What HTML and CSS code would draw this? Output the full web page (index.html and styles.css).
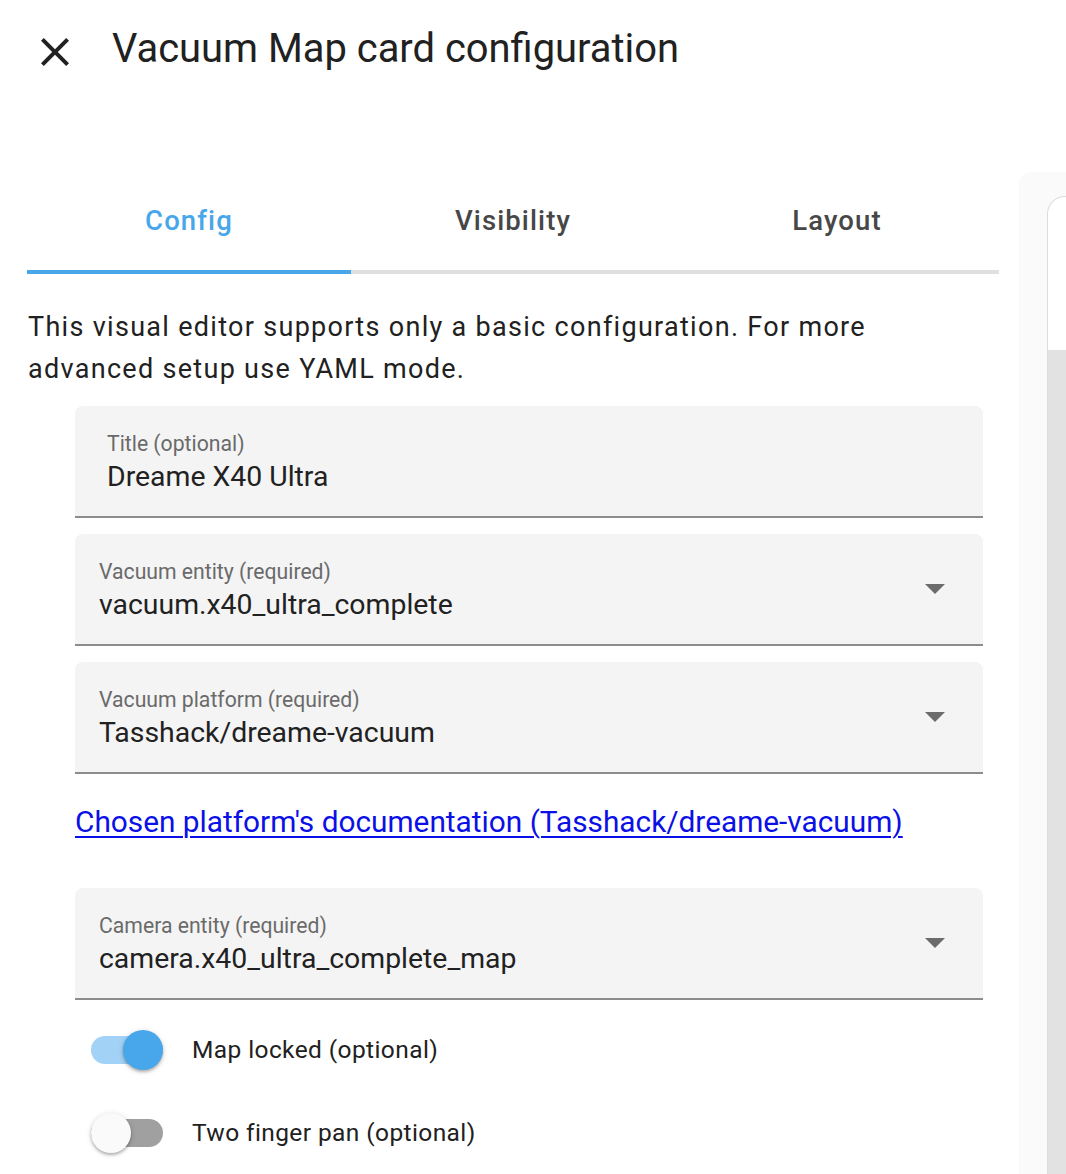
FILE: index.html
```html
<!DOCTYPE html>
<html>
<head>
<meta charset="utf-8">
<link rel="stylesheet" href="styles.css">
</head>
<body>
<div class="dialog">
  <header class="top">
    <svg class="close" viewBox="0 0 24 24" width="48" height="48"><path d="M19 6.41L17.59 5 12 10.59 6.41 5 5 6.41 10.59 12 5 17.59 6.41 19 12 13.41 17.59 19 19 17.59 13.41 12z" fill="#212121"/></svg>
    <h1 class="title">Vacuum Map card configuration</h1>
  </header>
  <div class="content">
    <div class="editor">
      <nav class="tabs">
        <div class="tab active">Config</div>
        <div class="tab">Visibility</div>
        <div class="tab">Layout</div>
      </nav>
      <p class="desc">This visual editor supports only a basic configuration. For more advanced setup use YAML mode.</p>

      <div class="field field-text">
        <div class="field-body">
          <div class="label">Title (optional)</div>
          <div class="value">Dreame X40 Ultra</div>
        </div>
      </div>

      <div class="field">
        <div class="field-body">
          <div class="label">Vacuum entity (required)</div>
          <div class="value">vacuum.x40_ultra_complete</div>
        </div>
        <svg class="arrow" viewBox="0 0 20 10" width="20" height="10"><path d="M0 0h20L10 10z" fill="#6b6b6b"/></svg>
      </div>

      <div class="field">
        <div class="field-body">
          <div class="label">Vacuum platform (required)</div>
          <div class="value">Tasshack/dreame-vacuum</div>
        </div>
        <svg class="arrow" viewBox="0 0 20 10" width="20" height="10"><path d="M0 0h20L10 10z" fill="#6b6b6b"/></svg>
      </div>

      <a class="doc-link" href="#">Chosen platform's documentation (Tasshack/dreame-vacuum)</a>

      <div class="field field-camera">
        <div class="field-body">
          <div class="label">Camera entity (required)</div>
          <div class="value">camera.x40_ultra_complete_map</div>
        </div>
        <svg class="arrow" viewBox="0 0 20 10" width="20" height="10"><path d="M0 0h20L10 10z" fill="#6b6b6b"/></svg>
      </div>

      <div class="toggles">
        <div class="toggle-row">
          <span class="switch on"><span class="track"></span><span class="knob"></span></span>
          <span class="toggle-label">Map locked (optional)</span>
        </div>
        <div class="toggle-row">
          <span class="switch"><span class="track"></span><span class="knob"></span></span>
          <span class="toggle-label">Two finger pan (optional)</span>
        </div>
      </div>
    </div>
    <aside class="preview">
      <div class="card">
        <div class="card-top"></div>
        <div class="card-bottom"></div>
      </div>
    </aside>
  </div>
</div>
</body>
</html>
```

FILE: styles.css
```css
* { box-sizing: border-box; }
html, body {
  margin: 0;
  padding: 0;
  background: #fff;
}
body {
  font-family: Roboto, "Noto Sans", sans-serif;
  color: #212121;
  width: 1066px;
  height: 1174px;
  overflow: hidden;
}
.dialog {
  display: flex;
  flex-direction: column;
  height: 1174px;
}
.top {
  display: flex;
  align-items: flex-start;
  padding: 25px 0 0 31px;
  height: 172px;
  flex: none;
}
.close {
  margin-top: 3px;
  flex: none;
}
.title {
  margin: 0 0 0 33px;
  font-size: 39.9px;
  font-weight: 400;
  line-height: 48px;
  color: #212121;
}
.content {
  display: flex;
  flex: 1;
  gap: 20px;
  padding-left: 27px;
  min-height: 0;
}
.editor {
  width: 972px;
  flex: none;
}
.tabs {
  display: flex;
}
.tab {
  flex: 1;
  text-align: center;
  height: 102px;
  line-height: 98px;
  border-bottom: 4px solid #e0e0e0;
  font-size: 27.5px;
  font-weight: 500;
  letter-spacing: 1.1px;
  color: #474747;
}
.tab.active {
  color: #48a7ea;
  border-bottom-color: #48a7ea;
}
.desc {
  margin: 32px 16px 16px 1px;
  font-size: 27px;
  line-height: 42px;
  letter-spacing: 1.3px;
  color: #212121;
}
.field {
  display: flex;
  align-items: center;
  margin: 0 16px 16px 48px;
  height: 112px;
  background: #f4f4f4;
  border-radius: 8px 8px 0 0;
  border-bottom: 2px solid #8c8c8c;
  padding: 0 38px 0 24px;
}
.field-text {
  padding-left: 32px;
}
.field-camera {
  margin-bottom: 8px;
}
.field-body {
  flex: 1;
  padding-top: 27px;
  align-self: flex-start;
}
.label {
  font-size: 21.2px;
  line-height: 22px;
  color: #6a6a6a;
}
.value {
  margin-top: 6px;
  font-size: 28.4px;
  line-height: 32px;
  color: #212121;
}
.arrow {
  flex: none;
}
.doc-link {
  display: block;
  margin: 28px 0 46px 48px;
  font-size: 29.8px;
  line-height: 40px;
  color: #0b10e6;
  text-decoration: underline;
  text-decoration-thickness: 2px;
  text-underline-offset: 4px;
}
.toggles {
  margin-top: 0;
  padding-left: 64px;
}
.toggle-row {
  display: flex;
  align-items: center;
  height: 83px;
}
.switch {
  position: relative;
  display: inline-flex;
  align-items: center;
  width: 72px;
  height: 40px;
  flex: none;
}
.track {
  width: 72px;
  height: 28px;
  border-radius: 14px;
  background: #a0a0a0;
}
.switch.on .track {
  background: #a2d2f6;
}
.knob {
  position: absolute;
  top: 0;
  left: 0;
  width: 40px;
  height: 40px;
  border-radius: 50%;
  background: #fafafa;
  box-shadow: 0 2px 3px rgba(0,0,0,0.25), 0 1px 6px rgba(0,0,0,0.12);
}
.switch.on .knob {
  left: 32px;
  background: #48a7ea;
}
.toggle-label {
  margin-left: 29px;
  font-size: 24.5px;
  letter-spacing: 0.4px;
  color: #212121;
}
.preview {
  flex: 1;
  background: #fafafa;
  border-top-left-radius: 12px;
  padding: 24px 0 0 28px;
  display: flex;
  flex-direction: column;
}
.card {
  flex: 1;
  display: flex;
  flex-direction: column;
  border: 1px solid #dcdcdc;
  border-right: none;
  border-bottom: none;
  border-top-left-radius: 18px;
  background: #fff;
  overflow: hidden;
}
.card-top {
  height: 153px;
  flex: none;
}
.card-bottom {
  flex: 1;
  background: #e2e2e2;
}
```
